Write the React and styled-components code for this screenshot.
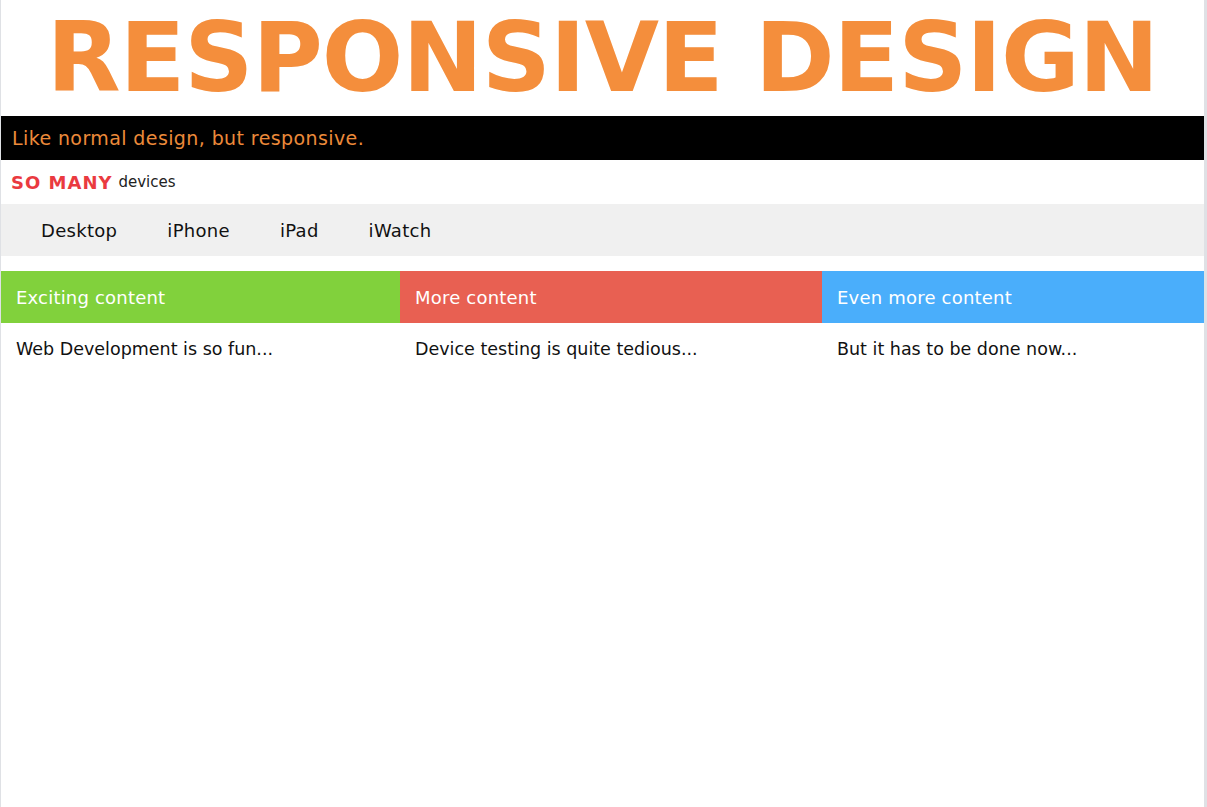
import React from "react";
import styled, { createGlobalStyle } from "styled-components";

const GlobalStyle = createGlobalStyle`
  html, body {
    margin: 0;
    padding: 0;
    background: #ffffff;
  }
  body {
    font-family: "DejaVu Sans", "Open Sans", sans-serif;
  }
`;

const Page = styled.div`
  height: 807px;
  box-sizing: border-box;
  border-left: 1px solid #dfe1e5;
  border-right: 3px solid #dfe1e5;
  display: flex;
  flex-direction: column;
`;

const Title = styled.h1`
  margin: 0;
  height: 116px;
  display: flex;
  align-items: center;
  justify-content: center;
  font-size: 96px;
  font-weight: 700;
  color: #f48e3c;
  letter-spacing: -1px;
  white-space: nowrap;
`;

const Tagline = styled.div`
  background: #000000;
  color: #ec8a3a;
  height: 44px;
  display: flex;
  align-items: center;
  padding-left: 11px;
  font-size: 19px;
  letter-spacing: 0.4px;
`;

const Subtitle = styled.div`
  height: 44px;
  display: flex;
  align-items: center;
  gap: 6px;
  padding-left: 10px;
  color: #222;
  font-size: 15px;
`;

const Strong = styled.strong`
  color: #ea3a40;
  font-size: 18px;
  font-weight: 800;
  letter-spacing: 1px;
`;

const Nav = styled.nav`
  background: #f0f0f0;
  height: 52px;
  display: flex;
  align-items: center;
  padding-left: 15px;
`;

const NavItem = styled.a`
  padding: 0 25px;
  font-size: 18px;
  letter-spacing: 0.3px;
  color: #111;
  text-decoration: none;
`;

const Columns = styled.div`
  margin-top: 15px;
  display: grid;
  grid-template-columns: 399px 422px 1fr;
`;

const Column = styled.section``;

const Header = styled.div`
  background: ${(props) => props.color};
  color: #ffffff;
  height: 52px;
  display: flex;
  align-items: center;
  padding-left: 15px;
  font-size: 18px;
  letter-spacing: 0.2px;
`;

const Body = styled.p`
  margin: 0;
  padding: 16px 15px;
  font-size: 17.5px;
  color: #111;
`;

const columns = [
  { title: "Exciting content", text: "Web Development is so fun...", color: "#81d13c" },
  { title: "More content", text: "Device testing is quite tedious...", color: "#e86052" },
  { title: "Even more content", text: "But it has to be done now...", color: "#4aaefb" },
];

const App = () => {
  return (
    <>
      <GlobalStyle />
      <Page>
        <Title>RESPONSIVE DESIGN</Title>
        <Tagline>Like normal design, but responsive.</Tagline>
        <Subtitle>
          <Strong>SO MANY</Strong> devices
        </Subtitle>
        <Nav>
          <NavItem>Desktop</NavItem>
          <NavItem>iPhone</NavItem>
          <NavItem>iPad</NavItem>
          <NavItem>iWatch</NavItem>
        </Nav>
        <Columns>
          {columns.map((col) => (
            <Column key={col.title}>
              <Header color={col.color}>{col.title}</Header>
              <Body>{col.text}</Body>
            </Column>
          ))}
        </Columns>
      </Page>
    </>
  );
};

export default App;
